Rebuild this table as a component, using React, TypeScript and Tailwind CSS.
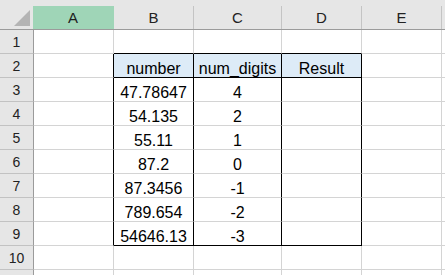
const cols = [
  { key: 'A', w: 'w-[80px]' },
  { key: 'B', w: 'w-[80px]' },
  { key: 'C', w: 'w-[88px]' },
  { key: 'D', w: 'w-[80px]' },
  { key: 'E', w: 'w-[80px]' },
]

const data: [string, string][] = [
  ['47.78647', '4'],
  ['54.135', '2'],
  ['55.11', '1'],
  ['87.2', '0'],
  ['87.3456', '-1'],
  ['789.654', '-2'],
  ['54646.13', '-3'],
]

function cellValue(row: number, col: number) {
  if (row === 2) return ['', 'number', 'num_digits', 'Result', ''][col]
  if (row >= 3 && row <= 9) {
    const d = data[row - 3]
    if (col === 1) return d[0]
    if (col === 2) return d[1]
  }
  return ''
}

function Cell({ row, col }: { row: number; col: number }) {
  const inTable = row >= 2 && row <= 9 && col >= 1 && col <= 3
  // right border black for table cells and the cell left of the table
  const rightBlack = row >= 2 && row <= 9 && col >= 0 && col <= 3
  // bottom border black for the row above, header row and last row
  const bottomBlack =
    col >= 1 && col <= 3 && (row === 1 || row === 2 || row === 9)
  return (
    <div
      className={`${cols[col].w} h-full flex items-end justify-center border-r border-b leading-none text-[16px] text-black ${
        rightBlack ? 'border-r-black' : 'border-r-[#d4d4d4]'
      } ${bottomBlack ? 'border-b-black' : 'border-b-[#d4d4d4]'} ${
        inTable && row === 2 ? 'bg-[#ddebf7]' : 'bg-white'
      }`}
    >
      {cellValue(row, col)}
    </div>
  )
}

export default function App() {
  const rows = [1, 2, 3, 4, 5, 6, 7, 8, 9, 10, 11]
  return (
    <div className="w-[445px] h-[275px] overflow-hidden bg-white font-['Liberation_Sans',Arial,sans-serif]">
      {/* column headers */}
      <div className="flex h-[30px] bg-[#e6e6e6] border-b border-[#9b9b9b]">
        <div className="w-[33px] h-full">
          <svg width="33" height="29" viewBox="0 0 33 29">
            <polygon points="14,26 30,26 30,10" fill="#b4b4b4" />
          </svg>
        </div>
        {cols.map((c, i) => (
          <div
            key={c.key}
            className={`${i === 0 ? 'w-[81px]' : c.w} h-full flex flex-col`}
          >
            <div
              className={`mt-[6px] flex-1 flex items-end justify-center pb-[4px] border-r text-[15px] leading-none ${
                i === 0
                  ? 'bg-[#9fd5b7] border-[#9fd5b7] text-[#1e1e1e]'
                  : 'border-[#c4c4c4] text-[#222]'
              }`}
            >
              {c.key}
            </div>
          </div>
        ))}
        <div className="flex-1" />
      </div>

      {rows.map((r) => (
        <div key={r} className="flex h-[24px]">
          <div className="w-[34px] h-full flex items-end justify-center pb-[4px] bg-[#e6e6e6] border-r border-r-[#9b9b9b] border-b border-b-[#c2c2c2] text-[14px] leading-none text-[#222]">
            {r <= 10 ? r : ''}
          </div>
          {cols.map((c, i) => (
            <Cell key={c.key} row={r} col={i} />
          ))}
          <div className="flex-1 h-full border-b border-[#d4d4d4]" />
        </div>
      ))}
    </div>
  )
}
